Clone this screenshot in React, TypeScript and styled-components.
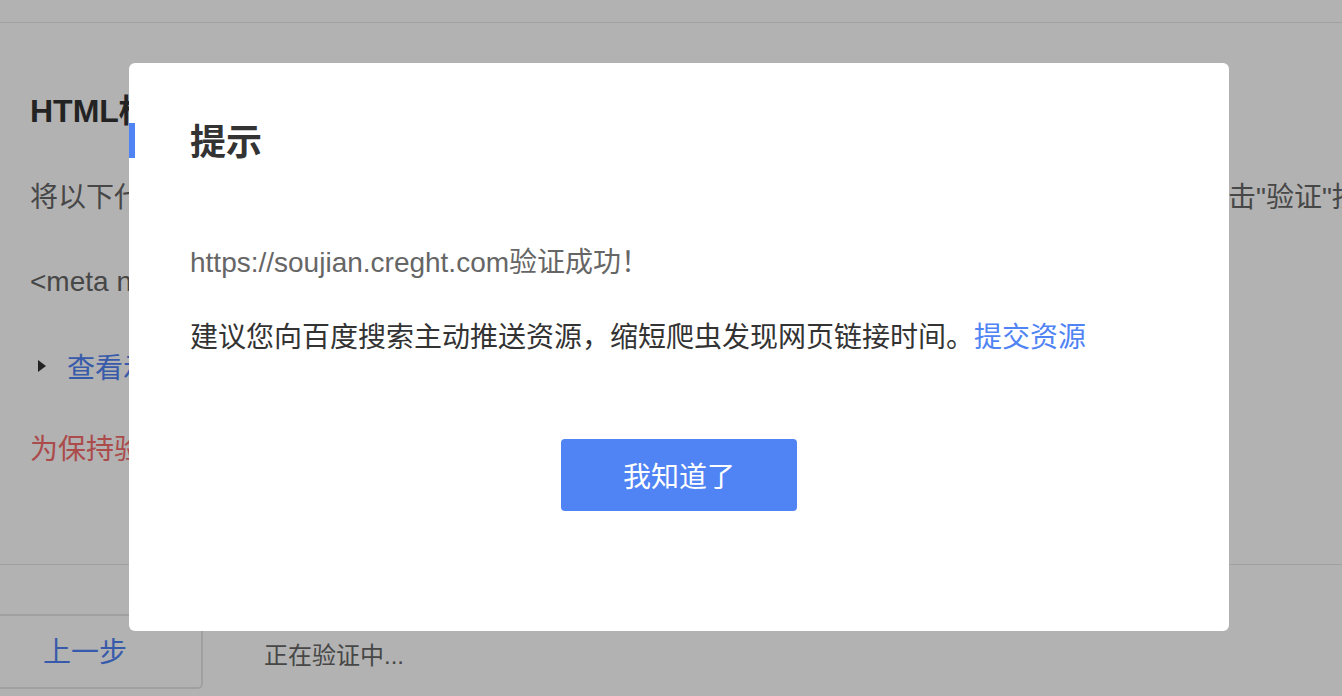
import styled, { createGlobalStyle } from 'styled-components';

const GlobalStyle = createGlobalStyle`
  html, body {
    margin: 0;
    padding: 0;
    background: #fff;
    overflow: hidden;
  }
  body {
    font-family: "Liberation Sans", "Noto Sans CJK SC", sans-serif;
  }
`;

const StyledPage = styled.div`
  position: relative;
  width: 100vw;
  height: 100vh;
  overflow: hidden;
  background: #fff;
`;

const StyledTopBar = styled.div`
  height: 22px;
  border-bottom: 1px solid #e5e5e5;
`;

const StyledSection = styled.div`
  padding: 68px 0 0 30px;
  height: 473px;
  border-bottom: 1px solid #e5e5e5;
  box-sizing: content-box;
`;

const StyledSectionTitle = styled.div`
  font-size: 32px;
  line-height: 40px;
  font-weight: 700;
  color: #333;
  margin-bottom: 47px;
`;

const StyledLine = styled.div<{ $tone?: 'text' | 'danger' }>`
  font-size: 28px;
  line-height: 40px;
  height: 40px;
  margin-bottom: 44px;
  white-space: nowrap;
  color: ${({ $tone }) => ($tone === 'danger' ? '#f56c6c' : '#666')};
`;

const StyledExpand = styled.div`
  display: flex;
  align-items: center;
  gap: 21px;
  height: 40px;
  margin-bottom: 44px;
  padding-left: 8px;
  font-size: 28px;
  color: #5083f4;
  white-space: nowrap;
`;

const StyledCaret = styled.span`
  width: 0;
  height: 0;
  border-top: 6px solid transparent;
  border-bottom: 6px solid transparent;
  border-left: 8px solid #333;
`;

const StyledFooter = styled.div`
  display: flex;
  align-items: center;
  padding-top: 49px;
`;

const StyledBackButton = styled.button`
  width: 236px;
  height: 75px;
  margin-left: -33px;
  margin-right: 61px;
  box-sizing: border-box;
  border: 2px solid #e5e5e5;
  border-radius: 0 0 5px 5px;
  background: #fff;
  color: #5083f4;
  font-family: inherit;
  font-size: 28px;
  padding: 0 0 4px;
`;

const StyledStatus = styled.span`
  font-size: 24px;
  color: #666;
  padding-top: 4px;
`;

const StyledMask = styled.div`
  position: fixed;
  inset: 0;
  background: rgba(0, 0, 0, 0.3);
`;

const StyledModal = styled.div`
  position: fixed;
  top: 63px;
  left: 129px;
  width: 1100px;
  box-sizing: border-box;
  padding: 56px 0 120px;
  background: #fff;
  border-radius: 6px;
`;

const StyledModalHeader = styled.div`
  display: flex;
  align-items: flex-start;
  gap: 55px;
  height: 48px;
`;

const StyledAccent = styled.span`
  width: 6px;
  height: 35px;
  margin-top: 4px;
  background: #5083f4;
`;

const StyledModalTitle = styled.h2`
  margin: 0;
  font-size: 36px;
  line-height: 48px;
  font-weight: 700;
  color: #333;
`;

const StyledModalBody = styled.div`
  padding: 76px 0 0 61px;
`;

const StyledMessage = styled.p<{ $muted?: boolean }>`
  margin: 0 0 35px;
  font-size: 28px;
  line-height: 40px;
  color: ${({ $muted }) => ($muted ? '#666' : '#333')};
`;

const StyledLink = styled.a`
  color: #5083f4;
  text-decoration: none;
`;

const StyledActions = styled.div`
  display: flex;
  justify-content: center;
  padding-top: 46px;
`;

const StyledPrimaryButton = styled.button`
  width: 236px;
  height: 72px;
  border: none;
  border-radius: 4px;
  background: #5083f4;
  color: #fff;
  font-family: inherit;
  font-size: 28px;
  cursor: pointer;
`;

export default function App() {
  return (
    <StyledPage>
      <GlobalStyle />
      <StyledTopBar />
      <StyledSection>
        <StyledSectionTitle>HTML标签验证</StyledSectionTitle>
        <StyledLine>
          将以下代码添加到您的网站首页HTML代码中，并放在&lt;head&gt;标签与&lt;/head&gt;标签之间，完成后点击"验证"按钮
        </StyledLine>
        <StyledLine>
          &lt;meta name="baidu-site-verification" content="code-Xk2pQ9aLm3" /&gt;
        </StyledLine>
        <StyledExpand>
          <StyledCaret />
          查看示例
        </StyledExpand>
        <StyledLine $tone="danger">为保持验证通过的状态，成功验证后请不要删除该标签</StyledLine>
      </StyledSection>
      <StyledFooter>
        <StyledBackButton>上一步</StyledBackButton>
        <StyledStatus>正在验证中...</StyledStatus>
      </StyledFooter>

      <StyledMask />
      <StyledModal>
        <StyledModalHeader>
          <StyledAccent />
          <StyledModalTitle>提示</StyledModalTitle>
        </StyledModalHeader>
        <StyledModalBody>
          <StyledMessage $muted>https://soujian.creght.com验证成功！</StyledMessage>
          <StyledMessage>
            建议您向百度搜索主动推送资源，缩短爬虫发现网页链接时间。
            <StyledLink href="#">提交资源</StyledLink>
          </StyledMessage>
        </StyledModalBody>
        <StyledActions>
          <StyledPrimaryButton>我知道了</StyledPrimaryButton>
        </StyledActions>
      </StyledModal>
    </StyledPage>
  );
}
